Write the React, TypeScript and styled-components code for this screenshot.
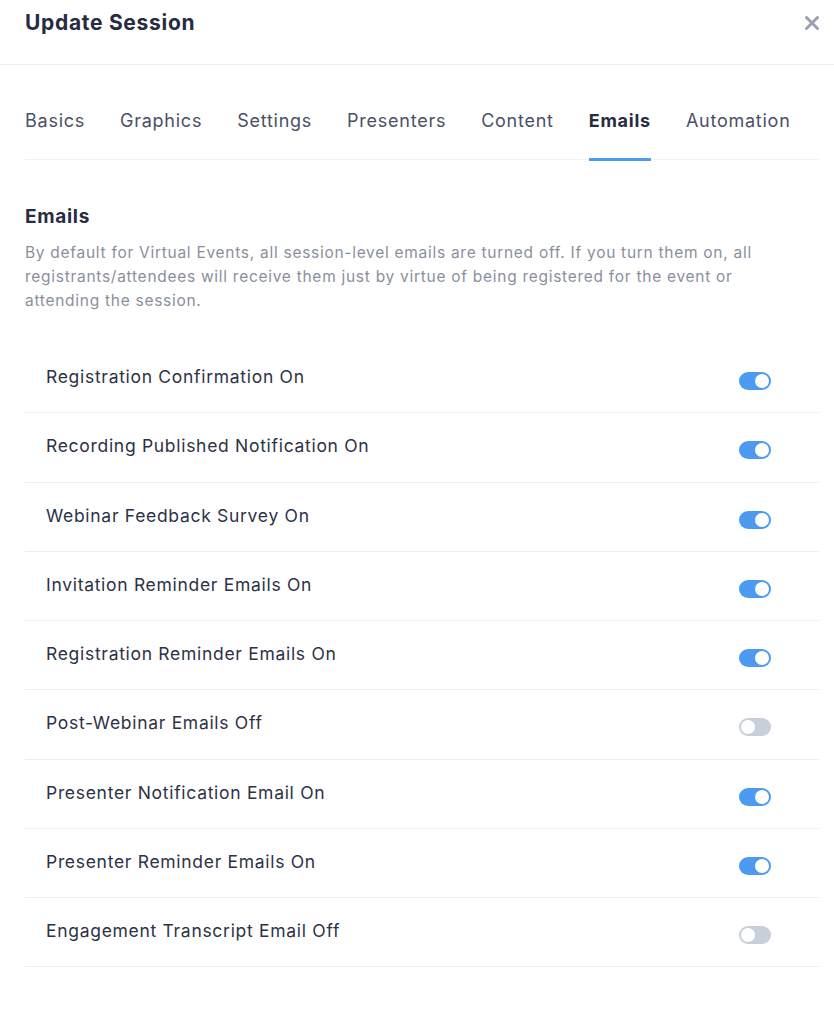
import { createGlobalStyle, styled } from 'styled-components';

const GlobalStyle = createGlobalStyle`
  body {
    margin: 0;
    background: #ffffff;
    font-family: Inter, "Liberation Sans", sans-serif;
    -webkit-font-smoothing: antialiased;
  }
  * { box-sizing: border-box; }
`;

const tabs = ['Basics', 'Graphics', 'Settings', 'Presenters', 'Content', 'Emails', 'Automation'];

const emails = [
  { label: 'Registration Confirmation', on: true },
  { label: 'Recording Published Notification', on: true },
  { label: 'Webinar Feedback Survey', on: true },
  { label: 'Invitation Reminder Emails', on: true },
  { label: 'Registration Reminder Emails', on: true },
  { label: 'Post-Webinar Emails', on: false },
  { label: 'Presenter Notification Email', on: true },
  { label: 'Presenter Reminder Emails', on: true },
  { label: 'Engagement Transcript Email', on: false },
];

export default function App() {
  return (
    <S.Modal>
      <GlobalStyle />
      <S.Header>
        <S.Title>Update Session</S.Title>
        <S.Close aria-label="Close">
          <svg width="16" height="16" viewBox="0 0 16 16">
            <path d="M2.5 2.5 L13.5 13.5 M13.5 2.5 L2.5 13.5" stroke="#9ca1b0" strokeWidth="3" strokeLinecap="round" />
          </svg>
        </S.Close>
      </S.Header>
      <S.Body>
        <S.Tabs>
          {tabs.map((t) => (
            <S.Tab key={t} $active={t === 'Emails'}>
              {t}
            </S.Tab>
          ))}
        </S.Tabs>
        <S.SectionTitle>Emails</S.SectionTitle>
        <S.Description>
          By default for Virtual Events, all session-level emails are turned off. If you turn them on, all
          registrants/attendees will receive them just by virtue of being registered for the event or
          attending the session.
        </S.Description>
        <S.List>
          {emails.map((e) => (
            <S.Row key={e.label}>
              <S.RowLabel>
                {e.label} {e.on ? 'On' : 'Off'}
              </S.RowLabel>
              <S.Toggle $on={e.on} role="switch" aria-checked={e.on}>
                <S.Knob $on={e.on} />
              </S.Toggle>
            </S.Row>
          ))}
        </S.List>
      </S.Body>
    </S.Modal>
  );
}

const S = {
  Modal: styled.div`
    width: 834px;
    min-height: 1034px;
    background: #ffffff;
  `,
  Header: styled.header`
    height: 65px;
    display: flex;
    align-items: flex-start;
    justify-content: space-between;
    padding: 8px 14px 0 25px;
    border-bottom: 1px solid #eceef2;
  `,
  Title: styled.h1`
    margin: 0;
    font-size: 21px;
    font-weight: 700;
    line-height: 30px;
    letter-spacing: 0.7px;
    color: #272c40;
  `,
  Close: styled.button`
    border: 0;
    background: none;
    padding: 0;
    margin-top: 7px;
    width: 16px;
    height: 16px;
    cursor: pointer;
  `,
  Body: styled.div`
    padding: 0 15px 0 25px;
  `,
  Tabs: styled.nav`
    display: flex;
    gap: 35px;
    margin-top: 41px;
    border-bottom: 1px solid #f0f2f5;
  `,
  Tab: styled.div<{ $active?: boolean }>`
    padding-bottom: 22px;
    font-size: 18px;
    line-height: 30px;
    letter-spacing: 0.75px;
    font-weight: ${(p) => (p.$active ? 700 : 400)};
    color: ${(p) => (p.$active ? '#272c40' : '#4a5066')};
    border-bottom: 3px solid ${(p) => (p.$active ? '#4c9bf0' : 'transparent')};
    margin-bottom: -2px;
    cursor: pointer;
  `,
  SectionTitle: styled.h2`
    margin: 43px 0 0;
    font-size: 19px;
    font-weight: 700;
    line-height: 28px;
    letter-spacing: 0.7px;
    color: #272c40;
  `,
  Description: styled.p`
    max-width: 745px;
    margin: 10px 0 0;
    font-size: 15.5px;
    line-height: 24px;
    letter-spacing: 0.72px;
    color: #8a8f9e;
  `,
  List: styled.div`
    margin-top: 31px;
  `,
  Row: styled.div`
    height: 69.25px;
    display: flex;
    align-items: center;
    justify-content: space-between;
    padding: 0 48px 0 21px;
    border-bottom: 1px solid #eceef2;
  `,
  RowLabel: styled.span`
    font-size: 17.5px;
    line-height: 26px;
    letter-spacing: 0.7px;
    color: #2d3246;
    margin-top: -2px;
  `,
  Toggle: styled.div<{ $on: boolean }>`
    position: relative;
    width: 32px;
    height: 18px;
    border-radius: 9px;
    background: ${(p) => (p.$on ? '#4c9bf0' : '#c9cedb')};
    margin-top: 6px;
    cursor: pointer;
  `,
  Knob: styled.span<{ $on: boolean }>`
    position: absolute;
    top: 2px;
    left: ${(p) => (p.$on ? '16px' : '2px')};
    width: 14px;
    height: 14px;
    border-radius: 50%;
    background: #ffffff;
  `,
};
